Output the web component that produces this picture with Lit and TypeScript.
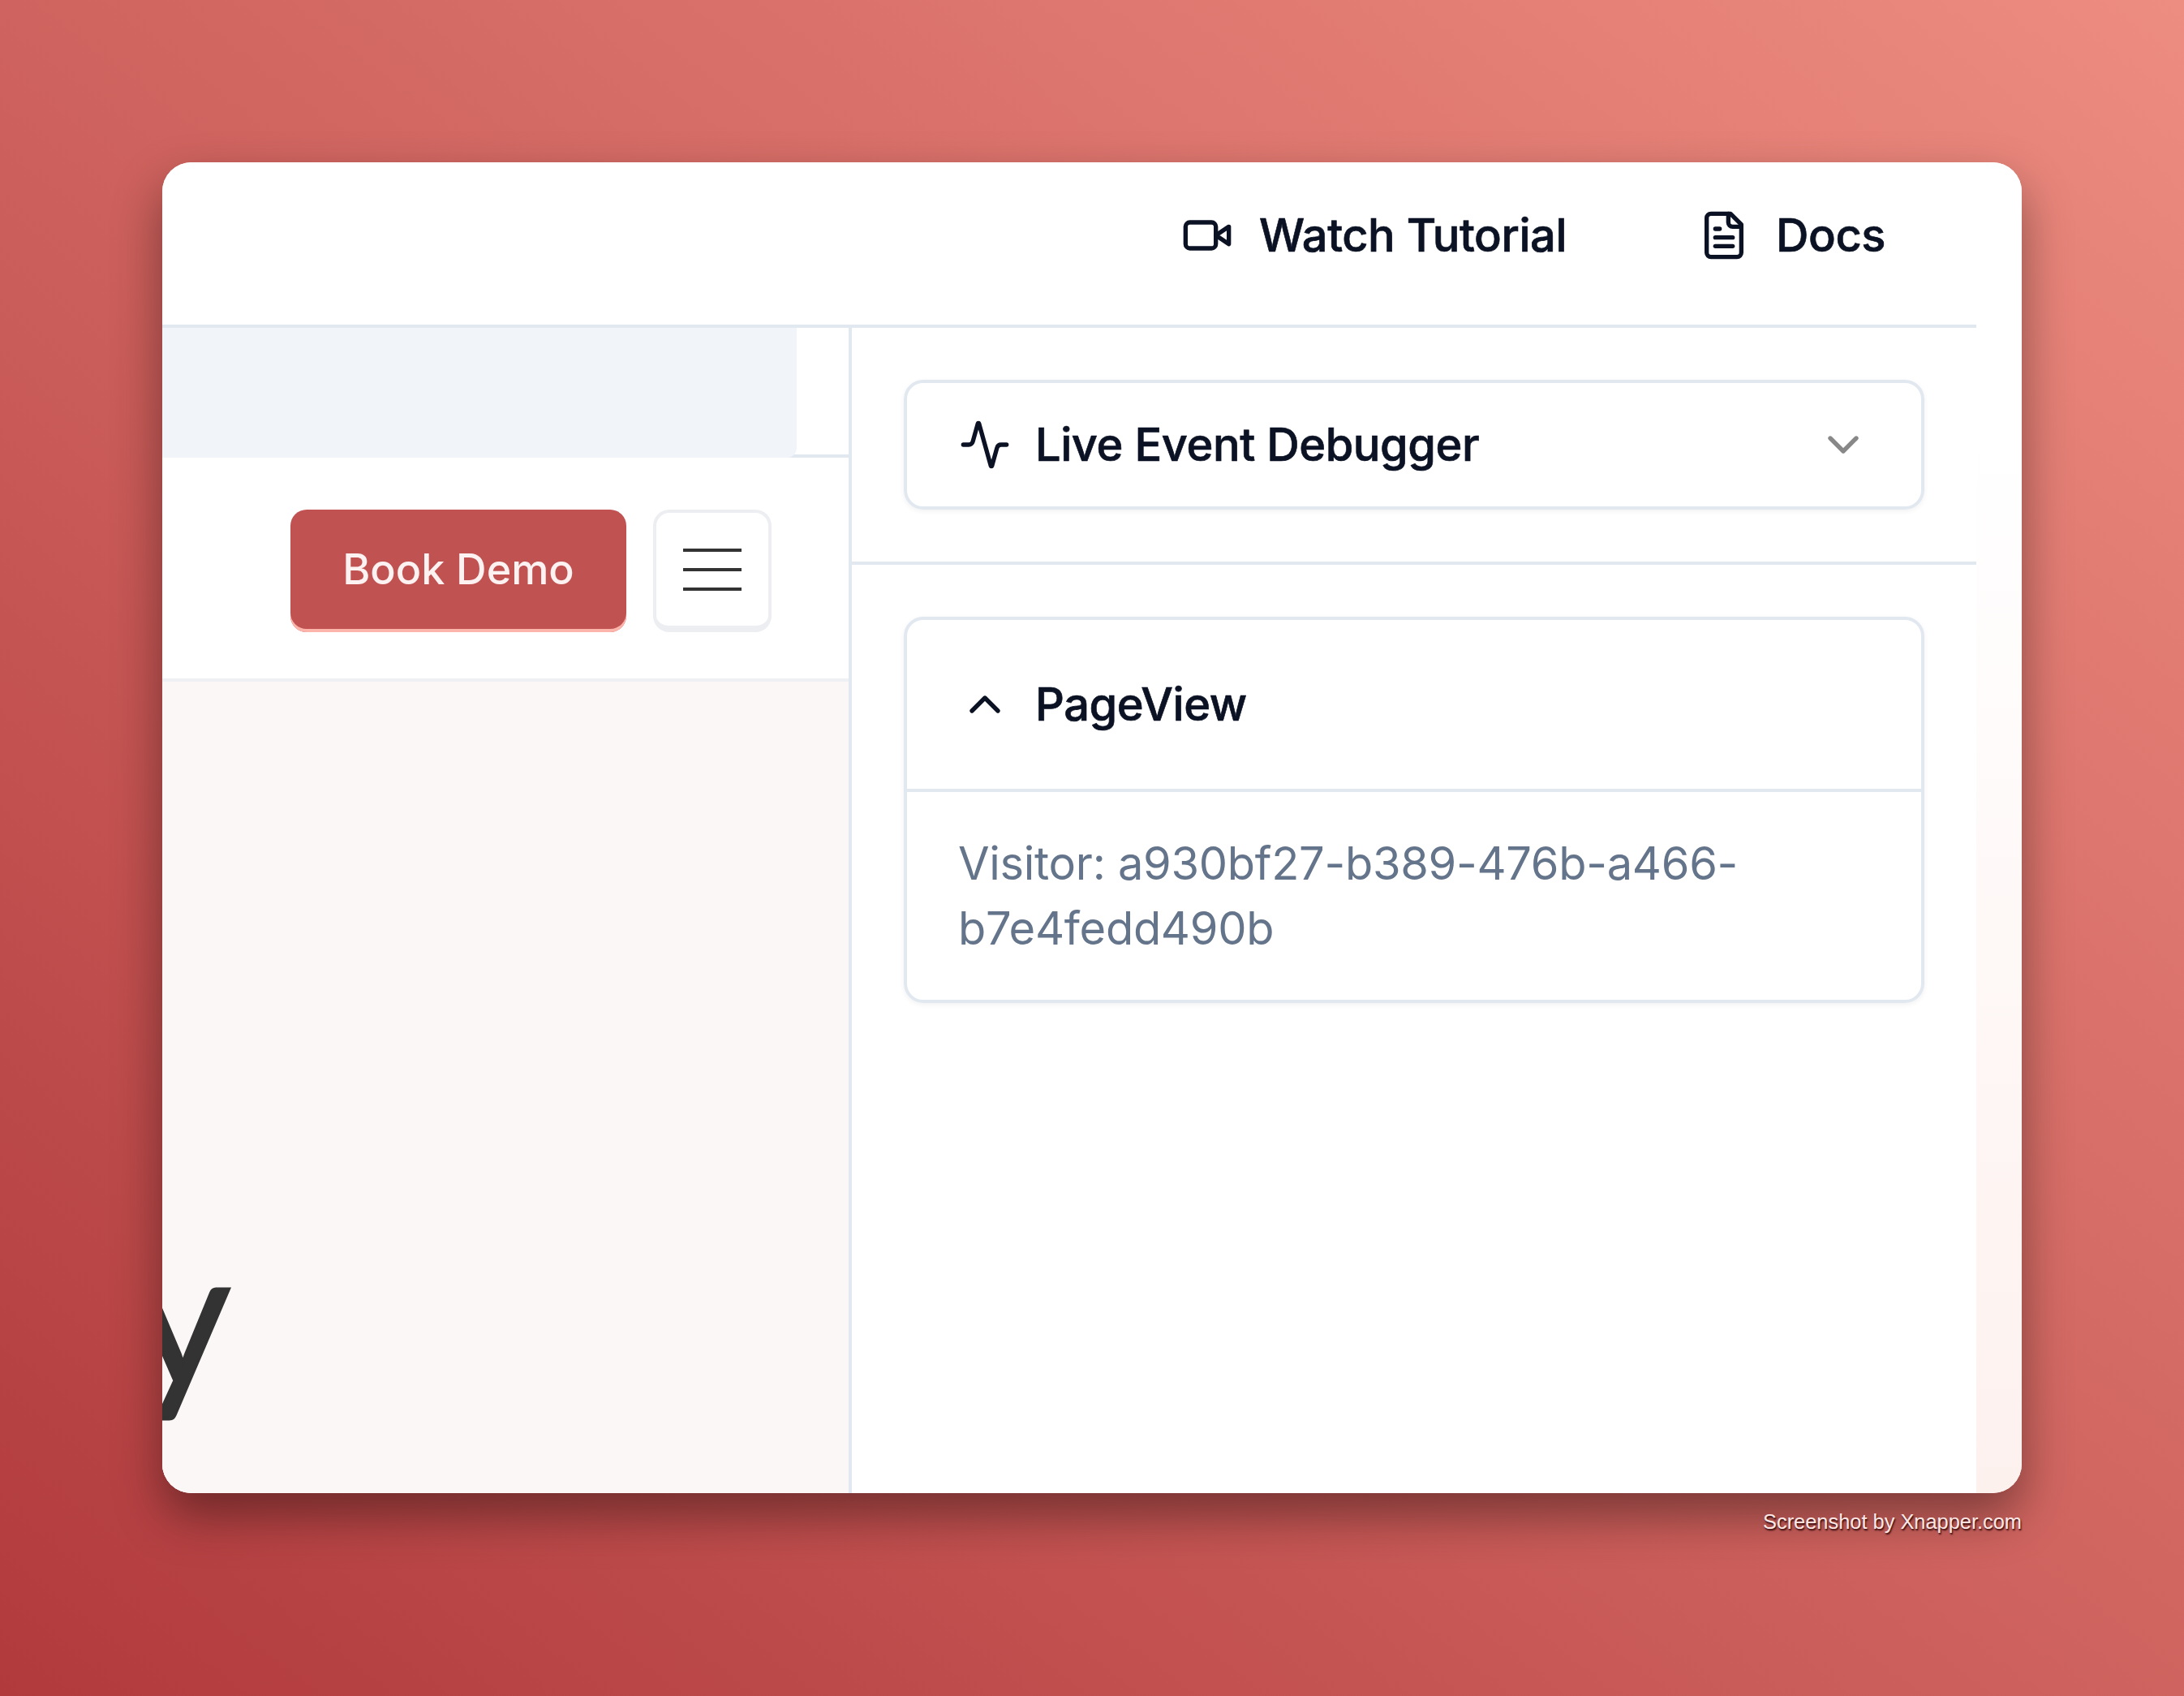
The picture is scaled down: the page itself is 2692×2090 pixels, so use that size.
import { LitElement, html, css, svg } from "lit";
import { customElement } from "lit/decorators.js";

const icon = (cls: string, parts: any) => html`<svg class="ico ${cls}" viewBox="0 0 24 24" fill="none" stroke="currentColor" stroke-width="2" stroke-linecap="round" stroke-linejoin="round">${parts}</svg>`;

@customElement("app-root")
export class AppRoot extends LitElement {
  static styles = css`
    :host { display: block; width: 2692px; height: 2090px; overflow: hidden; font-family: Inter, "Noto Sans", sans-serif; }
    .page { box-sizing: border-box; width: 2692px; height: 2090px; padding: 200px 200px 0; display: flex; flex-direction: column;
      background: linear-gradient(to top right, #b13a3d 0%, #ed8c80 100%); }
    .win { height: 1640px; border-radius: 36px; overflow: hidden; display: flex; background: #fff;
      box-shadow: 0 28px 60px rgba(0,0,0,.4); flex: none; }
    .main { width: 2236px; display: flex; flex-direction: column; flex: none; background: #fff; }
    .strip { flex: 1; background: linear-gradient(to bottom, #fff 0%, #fff 20%, #fdf1ee 100%); }
    .head { height: 200px; box-sizing: border-box; display: flex; align-items: center; justify-content: flex-end; padding: 0 112px 20px 0; gap: 162px; color: #0b1224; font-size: 56px; font-weight: 500; letter-spacing: -0.45px; -webkit-text-stroke: 0.7px #0b1224; flex: none; }
    .link { display: flex; align-items: center; gap: 32px; }
    .ico { width: 64px; height: 64px; flex: none; display: block; }
    .body { flex: 1; display: flex; min-height: 0; border-top: 4px solid #e2e8f0; }
    .left { width: 850px; box-sizing: border-box; border-right: 4px solid #e2e8f0; display: flex; flex-direction: column; overflow: hidden; flex: none; }
    .top { height: 160px; box-sizing: border-box; border-bottom: 4px solid #e2e8f0; flex: none; }
    .skeleton { width: 782px; height: 160px; background: #f1f5f9; border-bottom-right-radius: 12px; }
    .nav { height: 276px; box-sizing: border-box; border-bottom: 4px solid #eef0f3; padding: 64px 95px 0 0; display: flex; justify-content: flex-end; gap: 33px; flex: none; }
    button { font: inherit; margin: 0; padding: 0; cursor: pointer; box-sizing: border-box; display: flex; align-items: center; justify-content: center; }
    .demo { width: 414px; height: 151px; border: 0; border-radius: 20px; background: #c05252; color: #fdf2f2; font-size: 52px; font-weight: 500; box-shadow: inset 0 -4px 0 #fdb5ab; padding-bottom: 4px; }
    .menu { width: 146px; height: 151px; border: 4px solid #eceef1; border-bottom-width: 8px; border-radius: 20px; background: #fff; flex-direction: column; gap: 20px; }
    .menu i { display: block; width: 72px; height: 4px; background: #333; }
    .hero { flex: 1; background: #fbf7f6; color: #333; overflow: hidden; font-family: Lato, sans-serif; font-size: 236px; line-height: 1; font-weight: 400; -webkit-text-stroke: 3px #333; padding-top: 659px; }
    .hero span { display: block; margin-left: -37px; }
    .side { flex: 1; display: flex; flex-direction: column; color: #0b1224; font-size: 56px; font-weight: 500; letter-spacing: -0.45px; -webkit-text-stroke: 0.7px #0b1224; min-width: 0; }
    .ev { padding: 64px; border-bottom: 4px solid #e2e8f0; flex: none; }
    .card { border: 4px solid #e2e8f0; border-radius: 24px; box-shadow: 0 2px 6px rgba(15,23,42,.06); }
    .dd { height: 160px; box-sizing: border-box; display: flex; align-items: center; padding: 0 64px; gap: 30px; }
    .dd .grow { flex: 1; }
    .chev { color: #888; }
    .list { padding: 64px 64px 0; }
    .pv { display: flex; flex-direction: column; }
    .pvh { height: 212px; box-sizing: border-box; border-bottom: 4px solid #e2e8f0; display: flex; align-items: center; padding: 0 34px 0 64px; gap: 30px; }
    .pvb { padding: 48px 60px 48px 63px; font-size: 56px; font-weight: 400; letter-spacing: -0.3px; -webkit-text-stroke: 0; line-height: 80px; color: #64748b; }
    .foot { align-self: flex-end; margin-top: 21px; font: 25.4px "Liberation Sans", Arial, sans-serif; color: #fce8e6; text-shadow: 1px 2px 2px rgba(40,0,0,.95); }
  `;

  render() {
    return html`<div class="page">
      <div class="win">
        <div class="main">
          <header class="head">
            <a class="link">${icon("", svg`<path d="m22 8-6 4 6 4V8Z"/><rect x="2" y="6" width="14" height="12" rx="2"/>`)}<span>Watch Tutorial</span></a>
            <a class="link">${icon("", svg`<path d="M15 2H6a2 2 0 0 0-2 2v16a2 2 0 0 0 2 2h12a2 2 0 0 0 2-2V7Z"/><path d="M14 2v4a2 2 0 0 0 2 2h4"/><path d="M10 9H8"/><path d="M16 13H8"/><path d="M16 17H8"/>`)}<span>Docs</span></a>
          </header>
          <div class="body">
            <section class="left">
              <div class="top"><div class="skeleton"></div></div>
              <nav class="nav">
                <button class="demo">Book Demo</button>
                <button class="menu"><i></i><i></i><i></i></button>
              </nav>
              <div class="hero"><span>y</span></div>
            </section>
            <section class="side">
              <div class="ev">
                <div class="card dd">
                  ${icon("", svg`<path d="M22 12h-2.48a2 2 0 0 0-1.93 1.46l-2.35 8.36a.25.25 0 0 1-.48 0L9.24 2.18a.25.25 0 0 0-.48 0l-2.35 8.36A2 2 0 0 1 4.49 12H2"/>`)}
                  <span class="grow">Live Event Debugger</span>
                  ${icon("chev", svg`<path d="m6 9 6 6 6-6"/>`)}
                </div>
              </div>
              <div class="list">
                <div class="card pv">
                  <div class="pvh">${icon("", svg`<path d="m18 15-6-6-6 6"/>`)}<span>PageView</span></div>
                  <div class="pvb">Visitor: a930bf27-b389-476b-a466-b7e4fedd490b</div>
                </div>
              </div>
            </section>
          </div>
        </div>
        <div class="strip"></div>
      </div>
      <div class="foot">Screenshot by Xnapper.com</div>
    </div>`;
  }
}
